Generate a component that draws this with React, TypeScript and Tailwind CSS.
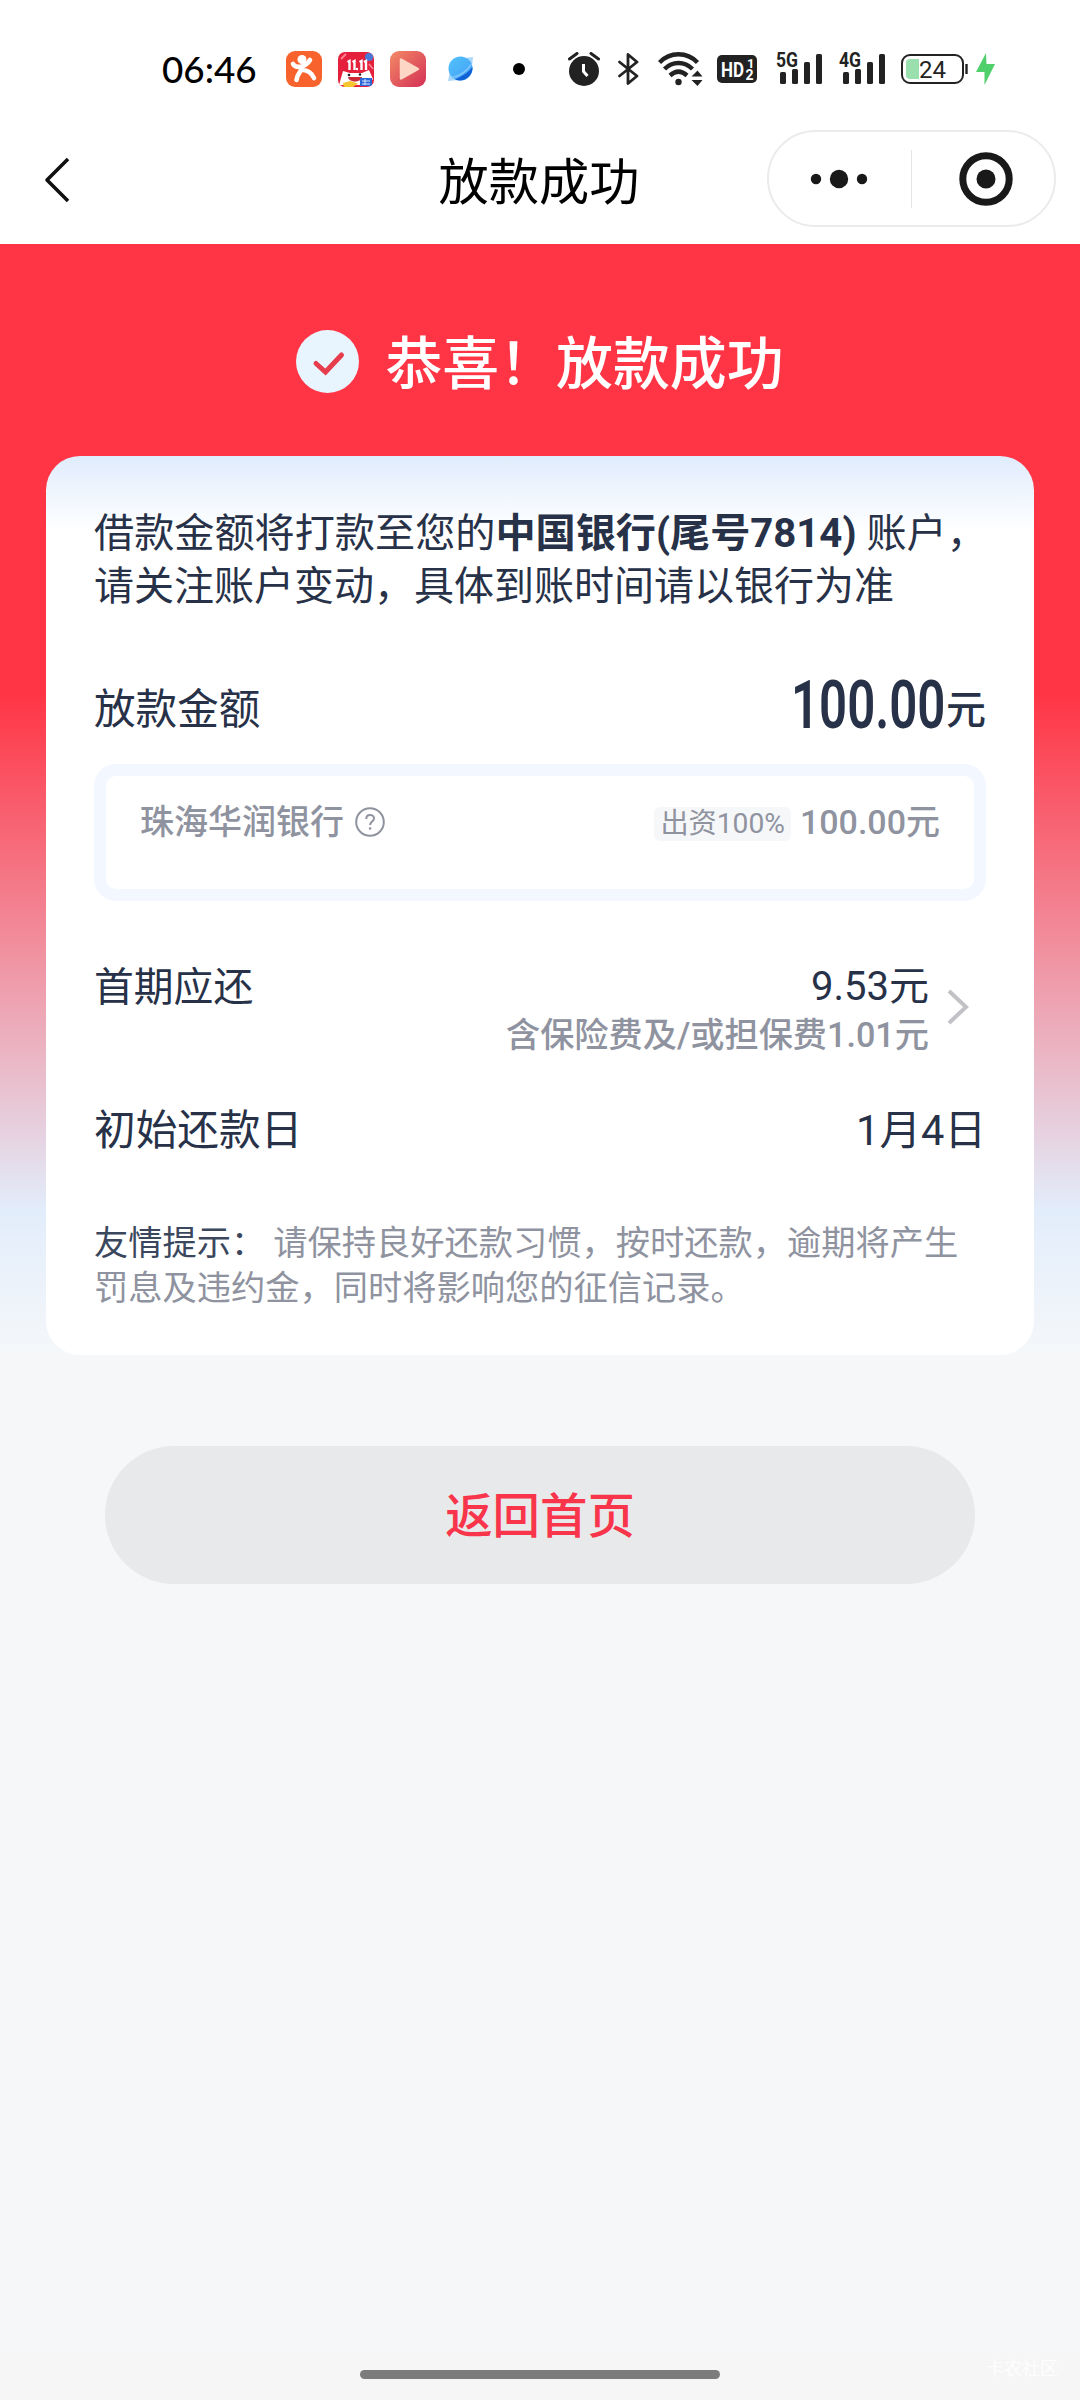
import { useState } from "react";

// icon aplikasi di status bar
const AppIcons = () => {
  return (
    <div className="flex items-center">
      <svg width="36" height="36" viewBox="0 0 36 36">
        <rect width="36" height="36" rx="9" fill="#f8622c" />
        <circle cx="16" cy="8.5" r="4.5" fill="#fff" />
        <path
          d="M7 13C10 17.500 19 17 24 9M16 16C16 21 11 22 10.5 29M17 19C21 19 26 22 28 27"
          fill="none"
          stroke="#fff"
          strokeWidth="4.6"
          strokeLinecap="round"
        />
      </svg>
      <svg className="ml-4" width="36" height="36" viewBox="0 0 36 36">
        <defs>
          <clipPath id="shop">
            <rect y="1" width="36" height="35" rx="7" />
          </clipPath>
        </defs>
        <g clipPath="url(#shop)">
          <rect width="36" height="36" fill="#e5203c" />
          <circle cx="31" cy="6" r="4" fill="#4a78d8" />
          <path d="M3 8L8 3M31 13L35 18" stroke="#ff7d8c" strokeWidth="2" />
          <path
            d="M9.500 11L11.500 10V19M14.500 11L16.500 10V19M21.500 11L23.500 10V19M26 11L28 10V19"
            fill="none"
            stroke="#fff"
            strokeWidth="2.400"
          />
          <circle cx="19" cy="18" r="1.200" fill="#fff" />
          <path d="M1 34L5 20L12 22H24L31 19L35 28L30 34Z" fill="#fff" />
          <path d="M10 26H24C23 32 11 32 10 26Z" fill="#c92a35" />
          <circle cx="11" cy="24" r="1.300" fill="#222" />
          <circle cx="22" cy="23.500" r="1.300" fill="#222" />
          <path d="M5 32L12 30L20 32.500L15 36H6Z" fill="#f7c52e" />
          <rect x="22" y="27" width="12" height="8" fill="#2b67d6" />
          <path d="M24 30H32M24 33H32M27 28V34" stroke="#dce8ff" strokeWidth="1" />
        </g>
      </svg>
      <svg className="ml-4" width="36" height="36" viewBox="0 0 36 36">
        <defs>
          <linearGradient id="play" x1="0" y1="0" x2="1" y2="1">
            <stop offset="0" stopColor="#f48a66" />
            <stop offset="1" stopColor="#d32f55" />
          </linearGradient>
        </defs>
        <rect width="36" height="36" rx="9" fill="url(#play)" />
        <path
          d="M11 8.500L28 18L11 27.500Z"
          fill="#fdd6c6"
          stroke="#fdd6c6"
          strokeWidth="2.500"
          strokeLinejoin="round"
        />
      </svg>
      <svg className="ml-[22px]" width="26" height="26" viewBox="0 0 26 26">
        <defs>
          <linearGradient id="planet" x1="0" y1="0" x2="1" y2="1">
            <stop offset="0" stopColor="#55c3fb" />
            <stop offset="1" stopColor="#3f9df5" />
          </linearGradient>
        </defs>
        <path d="M2 15L0 25L11 24ZM17 2L25 1L24 10Z" fill="#a9d8fb" />
        <circle cx="12.500" cy="12.500" r="12" fill="url(#planet)" />
        <path d="M24.500 11C25 20 16 27 7 23.500C14 20 20 17 24.500 11Z" fill="#1160d6" />
        <path d="M23.500 8C19 15 12 20 4 21.500" fill="none" stroke="#7fc4fb" strokeWidth="1.500" />
      </svg>
      <div className="ml-[39px] size-3 rounded-full bg-black" />
    </div>
  );
};

const Signal = ({ label }: { label: string }) => {
  return (
    <svg width="47" height="46" viewBox="0 -6 47 46" fill="#222">
      <text
        x="0"
        y="14.500"
        fontFamily="Roboto, sans-serif"
        fontSize="20"
        fontWeight="700"
        textLength="22"
        lengthAdjust="spacingAndGlyphs"
      >
        {label}
      </text>
      <rect x="4" y="20" width="6" height="12" rx="1.500" />
      <rect x="16" y="17" width="6" height="15" rx="1.500" />
      <rect x="28" y="10" width="6" height="22" rx="1.500" />
      <rect x="40" y="2" width="6" height="30" rx="1.500" />
    </svg>
  );
};

const SystemIcons = () => {
  return (
    <div className="flex items-center">
      <svg width="32" height="34" viewBox="0 0 32 34">
        <circle cx="16" cy="19" r="15" fill="#222" />
        <path
          d="M1.500 7L9 1.500M23 1.500L30.500 7"
          stroke="#222"
          strokeWidth="3"
          strokeLinecap="round"
        />
        <path d="M15.500 12V19.500L19.500 24" fill="none" stroke="#fff" strokeWidth="3" />
      </svg>
      <svg className="ml-[18px]" width="22" height="34" viewBox="0 0 22 34">
        <path
          d="M1.500 10L19 24L10 31.500V2.500L19 10L1.500 24"
          fill="none"
          stroke="#222"
          strokeWidth="2.800"
          strokeLinejoin="round"
          strokeLinecap="round"
        />
      </svg>
      <svg className="ml-[18px]" width="46" height="34" viewBox="0 0 46 34">
        <g fill="none" stroke="#222" strokeWidth="4.400">
          <path d="M1.500 10.500C12 -0.500 29 -0.500 39.500 10.500" />
          <path d="M6.500 17C14.500 9 26.500 9 34.500 17" />
          <path d="M12 23.500C17.500 18.500 23.500 18.500 29 23.500" />
        </g>
        <circle cx="20.500" cy="30" r="3.200" fill="#222" />
        <path d="M33.500 24.500L39.500 18.500L44.500 24.500ZM33.500 28L39.500 34L44.500 28Z" fill="#222" />
      </svg>
      <svg className="ml-[13px]" width="40" height="28" viewBox="0 0 40 28">
        <rect width="40" height="28" rx="5" fill="#222" />
        <g fill="#fff" fontFamily="Roboto, sans-serif" fontWeight="700">
          <text x="4" y="22" fontSize="21" textLength="23" lengthAdjust="spacingAndGlyphs">
            HD
          </text>
          <text x="30" y="13" fontSize="13">
            1
          </text>
          <text x="28.500" y="25" fontSize="14">
            2
          </text>
        </g>
      </svg>
      <div className="ml-[19px] flex gap-4">
        <Signal label="5G" />
        <Signal label="4G" />
      </div>
      <svg className="ml-[15px]" width="67" height="30" viewBox="0 0 67 30">
        <rect x="1" y="1" width="61" height="28" rx="8" fill="#fff" stroke="#222" strokeWidth="2" />
        <path d="M18 5V25H9Q5 25 5 21V9Q5 5 9 5Z" fill="#9adfae" />
        <path d="M65.500 10V20" stroke="#222" strokeWidth="2.400" />
        <text x="18" y="24" fontFamily="Roboto, sans-serif" fontSize="24" fill="#222">
          24
        </text>
      </svg>
      <svg className="ml-2" width="19" height="32" viewBox="0 0 19 32">
        <path d="M10 0L0 19H8.500V32L19 11H10.500Z" fill="#4fd06c" />
      </svg>
    </div>
  );
};

const StatusBar = () => {
  return (
    <div className="flex h-[112px] items-center bg-white pt-[26px] pl-[162px]">
      <div className="w-[124px] font-[Lato] text-[36.8px] font-medium leading-[36px] text-black">
        06:46
      </div>
      <div className="w-[282px]">
        <AppIcons />
      </div>
      <SystemIcons />
    </div>
  );
};

const NavBar = () => {
  return (
    <div className="grid h-[132px] grid-cols-3 items-start bg-white">
      <svg className="mt-[44px] ml-[42px]" width="30" height="48" viewBox="0 0 30 48">
        <path
          d="M26 3L5 24L26 45"
          fill="none"
          stroke="#111"
          strokeWidth="3.600"
          strokeLinejoin="round"
        />
      </svg>
      <div className="mt-[41px] pr-[2px] text-center text-[50.2px] leading-[60px] text-black">
        放款成功
      </div>
      <div className="mt-[18px] mr-[24px] flex h-[97px] w-[289px] items-center justify-self-end rounded-full border-2 border-[#ebebeb]">
        <svg className="ml-[41px]" width="58" height="20" viewBox="0 0 58 20" fill="#191919">
          <circle cx="6" cy="10" r="5.200" />
          <circle cx="29" cy="10" r="9.200" />
          <circle cx="52" cy="10" r="5.200" />
        </svg>
        <div className="ml-[43px] h-[58px] w-[1px] bg-[#e5e5e5]" />
        <svg className="ml-[47px]" width="54" height="54" viewBox="0 0 54 54">
          <circle cx="27" cy="27" r="23.200" fill="none" stroke="#191919" strokeWidth="7" />
          <circle cx="27" cy="27" r="9.500" fill="#191919" />
        </svg>
      </div>
    </div>
  );
};

const LoanCard = () => {
  return (
    <div className="mx-[46px] h-[899px] rounded-[34px] bg-white bg-[linear-gradient(180deg,#e0ecfc_0px,#ffffff_76px)] px-12 pt-[51px] text-[#273148]">
      <div className="text-[40px] leading-[53px] whitespace-nowrap">
        <p className="text-[40.15px]">
          借款金额将打款至您的
          <span className="font-bold">中国银行(尾号7814)</span> 账户，
        </p>
        <p>请关注账户变动，具体到账时间请以银行为准</p>
      </div>

      <div className="mt-[54px] flex h-[84px] items-center justify-between pt-[2px]">
        <div className="text-[41.6px] leading-[60px]">放款金额</div>
        <div className="flex items-baseline leading-[60px]">
          {/* angkanya dibuat lebih ramping */}
          <span className="mr-[-52px] inline-block origin-left scale-x-[0.745] text-[66px] font-semibold whitespace-nowrap">
            100.00
          </span>
          <span className="relative -top-1 text-[40px] font-medium">元</span>
        </div>
      </div>

      <div className="mt-[13px] flex h-[137px] items-start justify-between rounded-[22px] border-[12px] border-[#f3f7ff] px-[34px] pt-[22px] text-[34px] leading-[48px] font-medium text-[#8f939f]">
        <div className="flex items-center">
          珠海华润银行
          <svg className="ml-[11px]" width="30" height="30" viewBox="0 0 30 30">
            <circle cx="15" cy="15" r="13.800" fill="none" stroke="#8f939f" strokeWidth="2" />
            <path
              d="M11.200 12C11.200 6.500 19 6.700 19 11.500C19 14.500 15.100 14.600 15.100 18"
              fill="none"
              stroke="#8f939f"
              strokeWidth="2"
            />
            <circle cx="15.100" cy="21.500" r="1.300" fill="#8f939f" />
          </svg>
        </div>
        <div className="flex items-center">
          <span className="mt-[3px] mr-[9px] rounded-md bg-[#f6f7f9] px-[6px] text-[28.2px] leading-[34px] font-normal">
            出资100%
          </span>
          100.00元
        </div>
      </div>

      <div className="mt-[58px] flex h-[98px] justify-between">
        <div className="text-[39.8px] leading-[57px]">首期应还</div>
        <div className="flex items-center">
          <div className="pt-[3px] text-right">
            <div className="text-[40px] leading-[51px]">9.53元</div>
            <div className="text-[34.2px] leading-[46px] font-medium text-[#8f939f]">
              含保险费及/或担保费1.01元
            </div>
          </div>
          <svg className="mr-[16px] mb-[3px] ml-[17px]" width="24" height="38" viewBox="0 0 24 38">
            <path d="M3 3L20 19L3 35" fill="none" stroke="#c2c2c6" strokeWidth="4" />
          </svg>
        </div>
      </div>

      <div className="mt-[44px] flex h-[60px] items-center justify-between">
        <div className="text-[41.7px]">初始还款日</div>
        <div className="text-[41.6px]">1月4日</div>
      </div>

      <p className="mt-[60px] text-[34.25px] leading-[45px] text-[#8f939f]">
        <span className="mr-[8px] text-[#3b475c]">友情提示：</span>
        请保持良好还款习惯，按时还款，逾期将产生罚息及违约金，同时将影响您的征信记录。
      </p>
    </div>
  );
};

const App = () => {
  const [pressed, setPressed] = useState(false);

  return (
    <div className="flex h-[2400px] w-[1080px] flex-col overflow-hidden bg-[#f5f7f9] font-[Roboto,'Noto_Sans_CJK_SC',sans-serif]">
      <StatusBar />
      <NavBar />
      <div className="h-[1111px] bg-[linear-gradient(180deg,#ff3545_0%,#ff3545_40.5%,#e2edfb_87%,#f5f7f9_100%)]">
        <div className="flex h-[212px] items-center justify-center pt-[23px]">
          <svg width="63" height="63" viewBox="0 0 63 63">
            <circle cx="31.500" cy="31.500" r="31.500" fill="#e8f5ff" />
            <path
              d="M20 33.500L29.500 42L45.500 25"
              fill="none"
              stroke="#e63c4c"
              strokeWidth="5"
              strokeLinecap="round"
            />
          </svg>
          <div className="ml-[26px] pt-[6px] text-[56.9px] leading-[70px] font-medium text-white">
            恭喜！放款成功
          </div>
        </div>
        <LoanCard />
      </div>

      <button
        onClick={() => setPressed(!pressed)}
        className="mx-auto mt-[91px] h-[138px] w-[870px] rounded-full bg-[#e8e9eb] pt-[5px] text-[47.4px] font-medium text-[#f8354a]"
      >
        返回首页
      </button>

      <div className="relative mt-auto flex h-[49px] justify-center bg-[#f6f6f7] pt-[19px]">
        <div className="h-[9px] w-[360px] rounded-full bg-[#7c7c7c]" />
        <span className="absolute top-[5px] right-[22px] text-[18px] leading-[26px] text-white/80">
          卡农社区
        </span>
      </div>
    </div>
  );
};

export default App;
